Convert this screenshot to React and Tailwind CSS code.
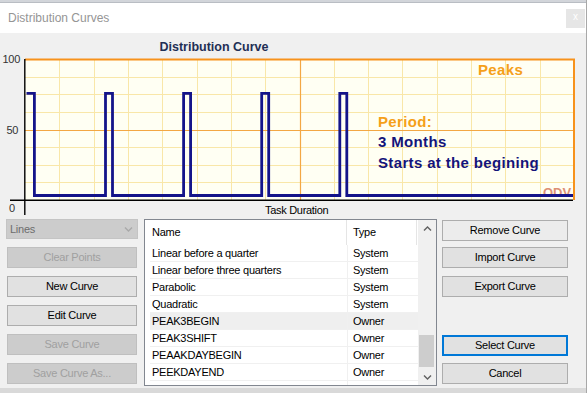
import React from 'react'

const rows = [
  ['Linear before a quarter', 'System'],
  ['Linear before three quarters', 'System'],
  ['Parabolic', 'System'],
  ['Quadratic', 'System'],
  ['PEAK3BEGIN', 'Owner', true],
  ['PEAK3SHIFT', 'Owner'],
  ['PEAAKDAYBEGIN', 'Owner'],
  ['PEEKDAYEND', 'Owner'],
]

function Btn({ children, disabled, focused, light }) {
  let cls = 'h-[21px] flex items-center justify-center border text-[11px] tracking-[-0.25px] '
  if (disabled) cls += 'bg-[#cccccc] border-[#bfbfbf] text-[#a0a0a0]'
  else if (focused) cls += 'bg-[#e1e1e1] border-2 border-[#0078d7] text-black'
  else if (light) cls += 'bg-[#ececec] border-[#adadad] text-black'
  else cls += 'bg-[#e1e1e1] border-[#adadad] text-black'
  return <div className={cls}>{children}</div>
}

function Chevron({ down, color = '#606060' }) {
  return (
    <svg width="9" height="6" viewBox="0 0 9 6">
      <path d={down ? 'M1 1.5 L4.5 5 L8 1.5' : 'M1 4.5 L4.5 1 L8 4.5'} fill="none" stroke={color} strokeWidth="1.4" />
    </svg>
  )
}

function Chart() {
  const left = 25, right = 574, top = 59, bottom = 200
  const dx = (right - left) / 16
  const dy = (bottom - top) / 8
  const vlines = []
  for (let k = 1; k < 16; k++) if (k !== 8) vlines.push(Math.round(left + k * dx) + 0.5)
  const hlines = []
  for (let k = 1; k < 8; k++) if (k !== 4) hlines.push(Math.round(top + k * dy) + 0.5)

  // curve: 5 narrow peaks at 75%
  const hi = 93.3, lo = 195.5
  let d = `M26.5 ${hi} H34.4 V${lo}`
  for (let i = 0; i < 4; i++) {
    const x0 = 105.5 + 78.1 * i
    d += ` H${x0.toFixed(1)} V${hi} H${(x0 + 7).toFixed(1)} V${lo}`
  }
  d += ' H573'

  return (
    <svg width="587" height="184" viewBox="0 33 587 184" className="block font-['Liberation_Sans',Arial,sans-serif]">
      <defs>
        <clipPath id="qdv">
          <rect x="530" y="180" width="50" height="14.5" />
        </clipPath>
      </defs>
      <text x="214" y="50.5" textAnchor="middle" fontSize="12.5" fontWeight="700" fill="#1f2f55">Distribution Curve</text>

      <rect x={left} y={top} width={right - left} height={bottom - top} fill="#fffff3" />
      {vlines.map(x => <line key={'v' + x} x1={x} x2={x} y1={top} y2={bottom} stroke="#f9e7a8" strokeWidth="1" />)}
      {hlines.map(y => <line key={'h' + y} x1={left} x2={right} y1={y} y2={y} stroke="#f9e7a8" strokeWidth="1" />)}
      <line x1="300.5" x2="300.5" y1={top} y2={bottom} stroke="#f3a744" strokeWidth="1.2" />
      <line x1={left} x2={right} y1="130.5" y2="130.5" stroke="#f3a744" strokeWidth="1.2" />
      <line x1={left} x2={right + 1} y1="59.5" y2="59.5" stroke="#f7921c" strokeWidth="2" />
      <line x1={right} x2={right} y1="59" y2={bottom} stroke="#f7921c" strokeWidth="2" />

      <g fontWeight="700" fontSize="15" letterSpacing="0.35">
        <text x="478" y="75" fill="#f5a01a">Peaks</text>
        <text x="378" y="127.3" fill="#f5a01a">Period:</text>
        <text x="378" y="147.3" fill="#14147a">3 Months</text>
        <text x="378" y="167.7" fill="#14147a">Starts at the begining</text>
      </g>
      <text x="543" y="197" fontSize="13" fontWeight="700" fill="#dd9075" clipPath="url(#qdv)">QDV</text>

      <path d={d} fill="none" stroke="#14148a" strokeWidth="2.8" strokeLinejoin="miter" />

      <line x1="10" x2="573" y1="200.3" y2="200.3" stroke="#000" strokeWidth="1.4" />
      <line x1="24.8" x2="24.8" y1="59" y2="215" stroke="#000" strokeWidth="1.4" />

      <g fontSize="11" fill="#333" letterSpacing="-0.3">
        <text x="2.5" y="63">100</text>
        <text x="6.5" y="134">50</text>
        <text x="9" y="212">0</text>
      </g>
      <text x="265" y="214" fontSize="11" fill="#000" letterSpacing="-0.3">Task Duration</text>
    </svg>
  )
}

export default function App() {
  return (
    <div className="w-[587px] h-[393px] overflow-hidden flex flex-col bg-[#f0f0f0] font-['Liberation_Sans',Arial,sans-serif] border-r border-[#a8a8a8]">
      <div className="h-[3px] bg-[#d2d5da] border-b border-[#b9bdc3]" />
      <div className="h-[30px] bg-white flex items-center justify-between pl-[8px] pr-[1px]">
        <span className="text-[12px] text-[#959595]">Distribution Curves</span>
        <div className="w-[19px] h-[19px] bg-[#e6e6e6] flex items-center justify-center text-[10px] text-white leading-none pb-[2px]">x</div>
      </div>

      <Chart />

      <div className="h-[171px] flex pl-[6px] pt-[2px]">
        {/* left column */}
        <div className="w-[132px] flex flex-col">
          <div className="h-[20px] bg-[#cccccc] border border-[#c4c4c4] flex items-center justify-between pl-[3px] pr-[4px] text-[11px] tracking-[-0.25px] text-[#6d6d6d]">
            <span>Lines</span>
            <Chevron down color="#a9a9a9" />
          </div>
          <div className="mx-[1px] mt-[8px] flex flex-col gap-[8px]">
            <Btn disabled>Clear Points</Btn>
            <Btn>New Curve</Btn>
            <Btn>Edit Curve</Btn>
            <Btn disabled>Save Curve</Btn>
            <Btn disabled>Save Curve As...</Btn>
          </div>
        </div>

        {/* list */}
        <div className="ml-[6px] w-[293px] h-[167px] border border-[#828790] bg-white flex text-[11px] tracking-[-0.25px] text-black">
          <div className="flex-1 pl-[5px] overflow-hidden">
            <div className="h-[25px] flex">
              <div className="w-[197px] border-r border-[#e5e5e5] pl-[2px] flex items-center">Name</div>
              <div className="w-[70px] border-r border-[#e5e5e5] pl-[6px] flex items-center">Type</div>
            </div>
            {rows.map(([name, type, sel]) => (
              <div key={name} className={'h-[17px] flex border-b border-[#f0f0f0] ' + (sel ? 'bg-[#efefef]' : '')}>
                <div className="w-[197px] pl-[2px] flex items-center">{name}</div>
                <div className="w-[70px] border-l border-[#f0f0f0] pl-[5px] flex items-center">{type}</div>
              </div>
            ))}
            <div className="h-[17px] flex">
              <div className="w-[197px]" />
              <div className="w-[70px] border-l border-[#f0f0f0]" />
            </div>
          </div>
          <div className="w-[18px] bg-[#f0f0f0] flex flex-col">
            <div className="h-[17px] flex items-center justify-center"><Chevron /></div>
            <div className="flex-1">
              <div className="mt-[98px] ml-[1px] w-[15px] h-[32px] bg-[#cdcdcd]" />
            </div>
            <div className="h-[17px] flex items-center justify-center"><Chevron down /></div>
          </div>
        </div>

        {/* right column */}
        <div className="ml-[5px] w-[126px] flex flex-col">
          <div className="mt-[1px]"><Btn light>Remove Curve</Btn></div>
          <div className="mt-[6px]"><Btn>Import Curve</Btn></div>
          <div className="mt-[8px]"><Btn>Export Curve</Btn></div>
          <div className="mt-[38px]"><Btn focused>Select Curve</Btn></div>
          <div className="mt-[7px]"><Btn>Cancel</Btn></div>
        </div>
      </div>
      <div className="flex-1 bg-[#d9d9d9]" />
    </div>
  )
}
